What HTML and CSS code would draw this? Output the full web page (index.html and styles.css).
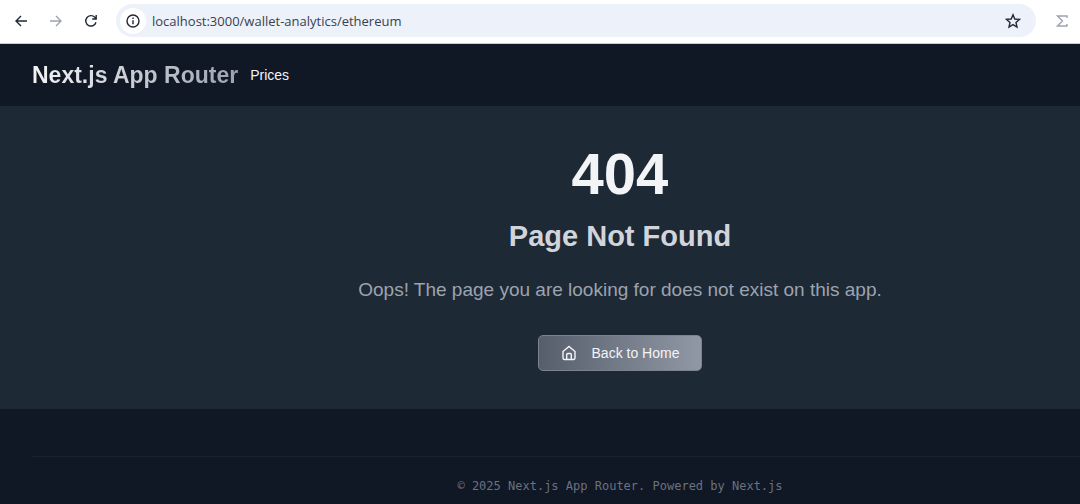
FILE: index.html
```html
<!DOCTYPE html>
<html lang="en">
<head>
  <meta charset="utf-8">
  <title>404 - Next.js App Router</title>
  <meta name="viewport" content="width=device-width, initial-scale=1">
  <link rel="stylesheet" href="styles.css">
</head>
<body>
  <div class="browser-bar">
    <button class="nav-button" type="button" aria-label="Back">
      <svg width="16" height="16" viewBox="0 0 16 16"><path d="M14 8H3M8 3L3 8l5 5"/></svg>
    </button>
    <button class="nav-button muted" type="button" aria-label="Forward" disabled>
      <svg width="16" height="16" viewBox="0 0 16 16"><path d="M2 8h11M8 3l5 5-5 5"/></svg>
    </button>
    <button class="nav-button" type="button" aria-label="Reload">
      <svg width="16" height="16" viewBox="0 0 16 16"><path d="M13 9.200A5.200 5.200 0 1 1 11.800 4.300L13 5.500M13.200 2v4H9.200"/></svg>
    </button>
    <div class="address">
      <button class="site-info" type="button" aria-label="Site information">
        <svg width="16" height="16" viewBox="0 0 16 16"><circle cx="8" cy="8" r="6"/><path d="M8 7.300v3.900M8 4.600v1.500"/></svg>
      </button>
      <input class="url" type="text" aria-label="Address" value="localhost:3000/wallet-analytics/ethereum">
      <button class="nav-button" type="button" aria-label="Bookmark">
        <svg width="16" height="16" viewBox="0 0 16 16"><path d="M8 1.800l1.800 4.200 4.700.4-3.500 3.100 1 4.500L8 11.600 4 14l1-4.500L1.500 6.400l4.700-.4z"/></svg>
      </button>
    </div>
    <button class="nav-button muted" type="button" aria-label="Extension">
      <svg width="16" height="16" viewBox="0 0 16 16"><path d="M13 5V3H3.500l5 5-5 5H13v-2"/></svg>
    </button>
  </div>

  <header class="header">
    <a class="brand" href="/">Next.js App Router</a>
    <a class="nav-link" href="/prices">Prices</a>
  </header>

  <main class="not-found">
    <h1>404</h1>
    <h2>Page Not Found</h2>
    <p>Oops! The page you are looking for does not exist on this app.</p>
    <a class="home-button" href="/">
      <svg width="16" height="16" viewBox="0 0 16 16"><path d="M2 6.500L8 1.500l6 5V13a1.500 1.500 0 0 1-1.500 1.500h-9A1.500 1.500 0 0 1 2 13zM5.700 14.500V9.500a1 1 0 0 1 1-1h2.600a1 1 0 0 1 1 1v5"/></svg>
      Back to Home
    </a>
  </main>

  <footer class="footer">
    <p class="copyright">© 2025 Next.js App Router. Powered by Next.js</p>
  </footer>
</body>
</html>
```

FILE: styles.css
```css
* {
  box-sizing: border-box;
}
body {
  margin: 0;
  min-height: 100vh;
  background: #101725;
  color: #f3f4f6;
  font-family: "Liberation Sans", Arial, sans-serif;
  overflow-x: hidden;
}
h1, h2, p {
  margin: 0;
}
svg {
  display: block;
  fill: none;
  stroke: currentColor;
  stroke-width: 1.4;
}

/* browser toolbar */
.browser-bar {
  display: flex;
  align-items: center;
  gap: 19px;
  height: 44px;
  padding: 0 10px 2px 13px;
  background: #fff;
  border-bottom: 1px solid #c8ccd2;
}
.nav-button, .site-info {
  padding: 0;
  border: none;
  background: none;
  color: #1f2937;
  cursor: pointer;
}
.muted {
  color: #9ca3af;
}
.address {
  flex: 1;
  display: flex;
  align-items: center;
  gap: 6px;
  height: 33px;
  margin: 0 -1px 0 -2px;
  padding: 0 15px 0 4px;
  border-radius: 17px;
  background: #edf1f9;
}
.site-info {
  padding: 5px;
  border-radius: 50%;
  background: #fff;
}
.url {
  flex: 1;
  min-width: 0;
  padding: 0;
  border: none;
  outline: none;
  background: none;
  color: #374151;
  font-family: "Open Sans", "Noto Sans", sans-serif;
  font-size: 13px;
}

/* site header */
.header {
  display: flex;
  align-items: center;
  gap: 12px;
  height: 62px;
  padding: 0 32px;
}
.brand {
  font-size: 23px;
  font-weight: bold;
  text-decoration: none;
  color: transparent;
  background: linear-gradient(to right, #f3f4f6, #9ca3af);
  background-clip: text;
  -webkit-background-clip: text;
}
.nav-link {
  font-size: 14px;
  color: #f3f4f6;
  text-decoration: none;
}

.not-found {
  display: flex;
  flex-direction: column;
  align-items: center;
  padding: 38px 0 38px 160px;
  background: #1e2936;
}
.not-found h1 {
  font-size: 58px;
  line-height: 60px;
}
.not-found h2 {
  margin-top: 14px;
  font-size: 29px;
  line-height: 36px;
  color: #d1d5db;
}
.not-found p {
  margin-top: 22px;
  font-size: 19px;
  line-height: 28px;
  color: #9ca3af;
}
.home-button {
  display: flex;
  align-items: center;
  gap: 15px;
  height: 36px;
  margin-top: 31px;
  padding: 0 22px;
  border: 1px solid #7b8290;
  border-radius: 5px;
  background: linear-gradient(to right, #565e6c, #9198a5);
  color: #f3f4f6;
  font-size: 14px;
  text-decoration: none;
}

.footer {
  margin: 47px 0 0 32px;
  padding: 20px 0 8px 128px;
  border-top: 1px solid #182131;
}
.copyright {
  font-family: "DejaVu Sans Mono", monospace;
  font-size: 12px;
  line-height: 18px;
  text-align: center;
  color: #6b7280;
}
```
